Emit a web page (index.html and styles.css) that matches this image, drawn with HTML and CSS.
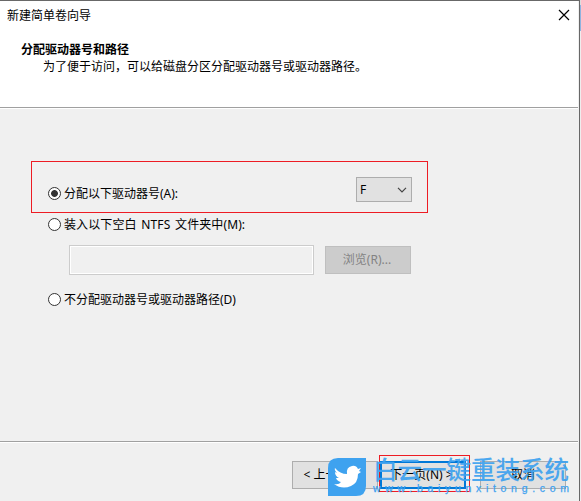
FILE: index.html
```html
<!DOCTYPE html>
<html lang="zh-CN">
<head>
<meta charset="utf-8">
<title>新建简单卷向导</title>
<link rel="stylesheet" href="styles.css">
</head>
<body>
<div class="window">
  <header class="header">
    <div class="titlebar">
      <span>新建简单卷向导</span>
      <svg class="close" width="12" height="12" viewBox="0 0 12 12"><path d="M1 1L11 11M11 1L1 11" stroke="#000" stroke-width="1.2" fill="none"/></svg>
    </div>
    <h1 class="heading">分配驱动器号和路径</h1>
    <p class="subheading">为了便于访问，可以给磁盘分区分配驱动器号或驱动器路径。</p>
  </header>
  <main class="content">
    <div class="highlight">
      <div class="option"><i class="radio checked"></i><span>分配以下驱动器号(A):</span></div>
      <div class="select"><span>F</span><svg width="10" height="6" viewBox="0 0 10 6"><path d="M1 .8L5 4.8L9 .8" stroke="#444" stroke-width="1.2" fill="none"/></svg></div>
    </div>
    <div class="option folder"><i class="radio"></i><span>装入以下空白 NTFS 文件夹中(M):</span></div>
    <div class="path-row"><div class="field"></div><div class="button disabled">浏览(R)...</div></div>
    <div class="option none"><i class="radio"></i><span>不分配驱动器号或驱动器路径(D)</span></div>
  </main>
  <footer class="footer">
    <div class="button prev">&lt; 上一页(B)</div>
    <div class="next-mark"><div class="button next">下一页(N) &gt;</div></div>
    <div class="button cancel">取消</div>
  </footer>
  <div class="watermark">
    <svg class="bird" width="38" height="38" viewBox="0 0 38 38"><path d="M10 0H38V28Q38 38 28 38H0V10Q0 0 10 0Z" fill="#3ea2ef"/><path d="M7 10Q12 16 19 16Q18 9 24 8Q28 7 30 11L33 10L31 13L33 14L30 16Q30 25 23 28Q14 32 6 26Q11 27 13 24Q9 23 8 20L11 20Q7 18 7 14L9 15Q6 12 7 10Z" fill="#fff"/></svg>
    <div class="brand"><div class="brand-name">白云一键重装系统</div><svg class="brand-url" width="198" height="14"><text x="0" y="9" textLength="196">www.baiyunxitong.com</text></svg></div>
  </div>
</div>
<div class="backdrop"></div>
</body>
</html>
```
FILE: styles.css
```css
* { box-sizing: border-box; }
body {
  margin: 0;
  width: 581px;
  height: 501px;
  overflow: hidden;
  display: flex;
  font: 12px/16px "Noto Sans", "Noto Sans CJK SC", sans-serif;
  color: #000;
}
.window {
  position: relative;
  width: 580px;
  height: 501px;
  display: flex;
  flex-direction: column;
  background: #f0f0f0;
  border-top: 1px solid #686868;
  border-right: 1px solid #686868;
}
.header {
  height: 108px;
  margin-right: 1px;
  background: linear-gradient(#a0a0a0, #a0a0a0) 0 106px / 100% 1px no-repeat, #fff;
}
.titlebar {
  height: 30px;
  display: flex;
  align-items: center;
  justify-content: space-between;
  padding: 0 8px 2px 7px;
}
.titlebar span { padding-top: 2px; }
.heading { margin: 11px 0 0 21px; font-size: 12px; line-height: 16px; }
.subheading { margin: 1px 0 0 43px; }
.content { height: 332px; padding-top: 52px; }
.highlight {
  width: 397px;
  height: 52px;
  margin-left: 31px;
  padding: 15px 15px 0 16px;
  border: 1px solid #ed1c24;
  display: flex;
  justify-content: space-between;
}
.option { display: flex; align-items: center; height: 16px; gap: 3px; white-space: nowrap; }
.option span { padding-top: 2px; }
.highlight .option { margin-top: 8px; }
.radio {
  width: 13px;
  height: 13px;
  border: 1px solid #333;
  border-radius: 50%;
  background: #fff;
}
.checked { background: radial-gradient(circle, #333 3px, #fff 3.8px); }
.select {
  width: 56px;
  height: 25px;
  padding: 0 4px 0 3px;
  border: 1px solid #adadad;
  background: #e1e1e1;
  display: flex;
  align-items: center;
  justify-content: space-between;
}
.folder { margin: 3px 0 0 48px; word-spacing: 1.5px; letter-spacing: .1px; }
.path-row { display: flex; gap: 11px; margin: 13px 0 0 69px; }
.field {
  width: 245px;
  height: 30px;
  border: 1px solid #ccc;
  box-shadow: inset 0 0 0 1px #fff;
}
.button {
  width: 86px;
  height: 28px;
  border: 1px solid #adadad;
  background: #e1e1e1;
  display: flex;
  align-items: center;
  justify-content: center;
  white-space: pre;
}
.disabled { margin-top: 1px; background: #ccc; border-color: #bfbfbf; color: #838383; padding-right: 2px; }
.none { margin: 16px 0 0 48px; }
.footer {
  height: 60px;
  margin-right: 1px;
  border-top: 1px solid #a0a0a0;
  box-shadow: inset 0 1px #fff;
  padding: 13px 0 0 292px;
  display: flex;
}
.prev { margin-top: 6px; padding-right: 2px; }
.next-mark { width: 91px; height: 37px; margin-left: 1px; padding: 5px 0 0; border: 1px solid #ed1c24; }
.next { border: 2px solid #0078d7; padding-right: 3px; }
.cancel { margin: 6px 0 0 10px; }
.watermark { position: absolute; left: 328px; top: 457px; display: flex; gap: 7px; color: #3ea2ef; }
.bird { flex: none; }
.brand-name { font: 500 24.5px/28px "Noto Sans CJK SC", sans-serif; white-space: nowrap; opacity: .92; margin-top: -3px; }
.brand-url { display: block; font: 10.5px "Liberation Sans", sans-serif; fill: #3ea2ef; stroke: #3ea2ef; stroke-width: .25px; }
.backdrop { width: 1px; background: linear-gradient(#ddd 5px, #8fb3df 5px, #8fb3df 31px, #eee 31px); }
```
